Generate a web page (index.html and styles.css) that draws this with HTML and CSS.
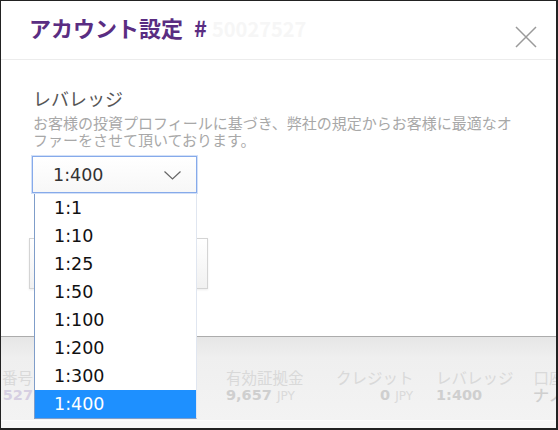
FILE: index.html
```html
<!DOCTYPE html>
<html lang="ja">
<head>
<meta charset="utf-8">
<title>アカウント設定</title>
<link rel="stylesheet" href="styles.css">
</head>
<body>
<div class="frame">
  <div class="modal">
    <div class="modal-header">
      <h1 class="title">アカウント設定<span class="hash">#</span><span class="acct">50027527</span></h1>
      <svg class="close" width="22" height="22" viewBox="0 0 22 22" aria-label="閉じる">
        <path d="M1 1 L21 21 M21 1 L1 21" stroke="#9a9a9a" stroke-width="1.5" fill="none"/>
      </svg>
    </div>
    <div class="modal-body">
      <div class="label">レバレッジ</div>
      <p class="desc">お客様の投資プロフィールに基づき、弊社の規定からお客様に最適なオファーをさせて頂いております。</p>
      <div class="select-wrap">
        <div class="select">
          <span class="select-value">1:400</span>
          <svg class="chev" width="17" height="9" viewBox="0 0 17 9"><path d="M0.5 0.5 L8.5 8 L16.5 0.5" stroke="#666" stroke-width="1.2" fill="none"/></svg>
        </div>
        <ul class="options">
          <li>1:1</li>
          <li>1:10</li>
          <li>1:25</li>
          <li>1:50</li>
          <li>1:100</li>
          <li>1:200</li>
          <li>1:300</li>
          <li class="active">1:400</li>
        </ul>
      </div>
      <div class="btn">保存</div>
    </div>
  </div>
  <div class="footer">
    <div class="bar">
      <div class="col c1"><div class="flab">番号</div><div class="fval purple">527</div></div>
      <div class="col c2"><div class="flab">有効証拠金</div><div class="fval">9,657 <span class="cur">JPY</span></div></div>
      <div class="col c3"><div class="flab">クレジット</div><div class="fval right">0 <span class="cur">JPY</span></div></div>
      <div class="col c4"><div class="flab">レバレッジ</div><div class="fval">1:400</div></div>
      <div class="col c5"><div class="flab">口座</div><div class="fval">ナノ</div></div>
    </div>
    <div class="strip"></div>
  </div>
</div>
</body>
</html>
```

FILE: styles.css
```css
* { box-sizing: border-box; }
html, body { margin: 0; padding: 0; }
body {
  width: 558px;
  height: 430px;
  overflow: hidden;
  font-family: "Noto Sans CJK JP", "DejaVu Sans", sans-serif;
  background: #fff;
}
.frame {
  width: 558px;
  height: 430px;
  border-style: solid;
  border-color: #222;
  border-width: 1px 2px 2px 1px;
  display: flex;
  flex-direction: column;
  overflow: hidden;
}
.modal {
  position: relative;
  z-index: 2;
  height: 336px;
  flex: none;
  background: #fff;
  border-bottom: 1px solid #acacac;
}
.modal-header {
  height: 59px;
  border-bottom: 1px solid #ececec;
  display: flex;
  align-items: flex-start;
  justify-content: space-between;
  padding: 0 19px 0 28px;
}
.title {
  margin: 10px 0 0;
  font-size: 22px;
  line-height: 32px;
  font-weight: bold;
  color: #5a2d82;
  white-space: nowrap;
}
.hash { margin-left: 11px; }
.acct { color: #f6f6f6; font-size: 20px; margin-left: 5px; }
.close { margin-top: 25px; }
.modal-body {
  padding: 26px 38px 0 31px;
}
.label {
  font-size: 18px;
  line-height: 24px;
  color: #555;
  padding-left: 1px;
}
.desc {
  margin: 4px 0 0;
  font-size: 15px;
  line-height: 17px;
  color: #a8a8a8;
  padding-left: 1px;
}
.select-wrap {
  position: relative;
  width: 165px;
  margin-top: 8px;
}
.select {
  height: 37px;
  border: 1px solid #86aaea;
  box-shadow: 0 0 0 1px #d2e0f8;
  background: linear-gradient(#ffffff, #f7f7f7);
  display: flex;
  align-items: center;
  justify-content: space-between;
  padding: 0 15px 0 20px;
}
.select-value {
  font-family: "DejaVu Sans", sans-serif;
  font-size: 17.5px;
  color: #333;
}
.chev { margin-top: 2px; }
.options {
  position: absolute;
  top: calc(100% + 1px);
  left: 2px;
  width: 163px;
  margin: 0;
  padding: 0;
  list-style: none;
  background: #fff;
  border: 1px solid #7f9dc9;
  border-top: none;
  border-right-color: #e0e6f0;
  z-index: 5;
}
.options li {
  height: 28px;
  line-height: 28px;
  padding-left: 19px;
  font-family: "DejaVu Sans", sans-serif;
  font-size: 17.5px;
  color: #111;
}
.options li.active {
  background: #1e90ff;
  color: #fff;
}
.btn {
  margin-top: 45px;
  margin-left: -3px;
  width: 179px;
  height: 51px;
  border: 1px solid #d4d4d4;
  background: linear-gradient(#ffffff, #f1f1f1);
  box-shadow: 0 1px 2px rgba(0,0,0,0.08);
  display: flex;
  align-items: center;
  justify-content: center;
  color: #555;
  font-size: 16px;
}
.footer {
  flex: 1;
  display: flex;
  flex-direction: column;
  background: #f6f6f6;
}
.bar {
  height: 84px;
  flex: none;
  background: linear-gradient(#e6e6e6 0%, #efefef 25%, #f1f1f1 60%, #f3f3f3 100%);
  border-bottom: 1px solid #fbfbfb;
  display: flex;
  padding-top: 31px;
}
.strip { flex: 1; background: #f7f7f7; }
.col { flex: none; white-space: nowrap; }
.flab {
  font-size: 15.5px;
  line-height: 19px;
  color: #d9d9d9;
}
.fval {
  font-family: "DejaVu Sans", sans-serif;
  font-weight: bold;
  font-size: 14.5px;
  line-height: 17px;
  color: #cfcfcf;
}
.fval.purple { color: #d6cfe2; }
.fval.right { text-align: right; }
.cur { font-weight: normal; font-size: 12px; color: #dadada; }
.c1 { width: 33px; text-align: right; overflow: hidden; }
.c1 .flab, .c1 .fval { margin-right: 1px; }
.c2 { margin-left: 192px; width: 78px; }
.c3 { margin-left: 32px; width: 77px; }
.c4 { margin-left: 23px; }
.c5 { margin-left: 20px; }
```
